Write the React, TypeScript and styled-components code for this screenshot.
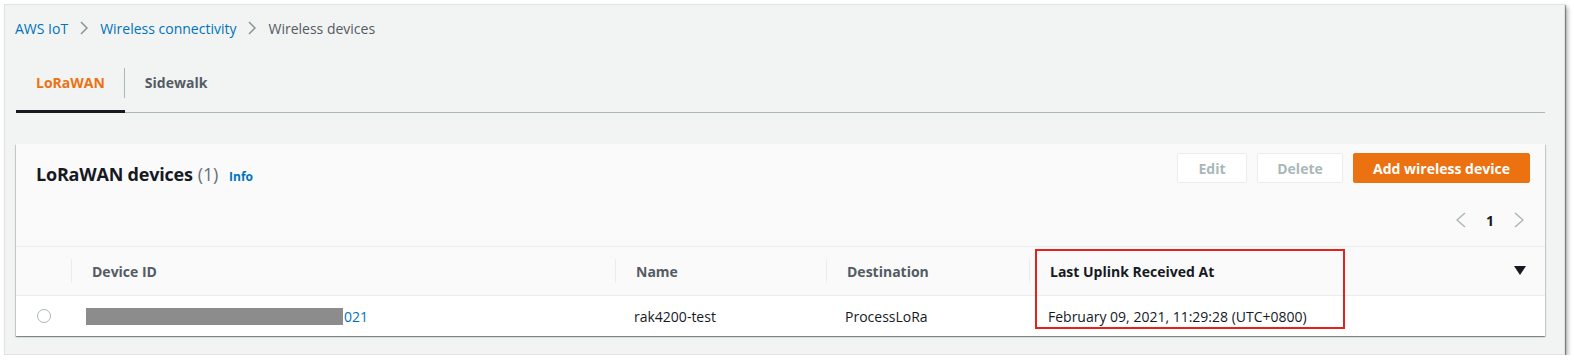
import React from "react";
import styled, { createGlobalStyle } from "styled-components";

const Global = createGlobalStyle`
  html, body { margin: 0; padding: 0; background: #ffffff; }
  body { font-family: "Open Sans", "Liberation Sans", Arial, sans-serif; }
  * { box-sizing: border-box; }
`;

const Frame = styled.div`
  margin: 4px 0 0 4px;
  width: 1561px;
  height: 351px;
  background: #f2f3f3;
  border: 1px solid #e1e3e3;
  box-shadow: 1px 1px 1px rgba(0,0,0,0.35), 3px 3px 4px rgba(0,0,0,0.28);
  padding: 0 19px 0 11px;
  display: flex;
  flex-direction: column;
`;

const Breadcrumbs = styled.nav`
  display: flex;
  align-items: center;
  height: 46px;
  margin-left: -1px;
  font-size: 14px;
  gap: 12px;
`;

const Crumb = styled.span<{ $current?: boolean }>`
  color: ${(p) => (p.$current ? "#545b64" : "#0073bb")};
  white-space: nowrap;
`;

const Tabs = styled.div`
  display: flex;
  align-items: stretch;
  height: 62px;
  border-bottom: 1px solid #aab7b8;
`;

const Tab = styled.div<{ $active?: boolean; $divider?: boolean }>`
  display: flex;
  align-items: center;
  padding: 3px 20px 0;
  font-size: 14px;
  font-weight: 700;
  color: ${(p) => (p.$active ? "#ec7211" : "#545b64")};
  position: relative;
  border-bottom: 3px solid ${(p) => (p.$active ? "#16191f" : "transparent")};
  margin-bottom: -1px;
  &::after {
    content: "";
    display: ${(p) => (p.$divider ? "block" : "none")};
    position: absolute;
    right: 0;
    top: 17px;
    height: 30px;
    width: 1px;
    background: #aab7b8;
  }
`;

const Card = styled.section`
  margin-top: 31px;
  width: 1529px;
  background: #fafafa;
  box-shadow: 0 1px 1px 0 rgba(0,28,36,0.3), 1px 1px 1px 0 rgba(0,28,36,0.15), -1px 1px 1px 0 rgba(0,28,36,0.15);
  display: flex;
  flex-direction: column;
`;

const CardHeader = styled.header`
  height: 102px;
  padding: 9px 15px 0 20px;
  display: flex;
  flex-direction: column;
`;

const HeaderTop = styled.div`
  display: flex;
  justify-content: space-between;
  align-items: flex-start;
`;

const Title = styled.h2`
  margin: 0;
  padding-top: 10px;
  font-size: 18px;
  line-height: 22px;
  font-weight: 700;
  color: #16191f;
  display: flex;
  align-items: baseline;
  letter-spacing: -0.2px;
`;

const Count = styled.span`
  font-weight: 400;
  color: #687078;
  margin-left: 5px;
`;

const InfoLink = styled.span`
  font-size: 12px;
  font-weight: 700;
  color: #0073bb;
  margin-left: 11px;
  letter-spacing: 0;
`;

const Actions = styled.div`
  display: flex;
  gap: 10px;
`;

const Button = styled.button<{ $primary?: boolean; $w: number }>`
  width: ${(p) => p.$w}px;
  height: 30px;
  font-family: inherit;
  font-size: 14px;
  font-weight: 700;
  border-radius: 2px;
  border: 1px solid ${(p) => (p.$primary ? "#ec7211" : "#eaeded")};
  background: ${(p) => (p.$primary ? "#ec7211" : "#ffffff")};
  color: ${(p) => (p.$primary ? "#ffffff" : "#aab7b8")};
  padding: 0;
`;

const Pager = styled.div`
  margin-top: 20px;
  align-self: flex-end;
  display: flex;
  align-items: center;
  height: 24px;
  gap: 20px;
  margin-right: 6px;
  font-size: 14px;
  font-weight: 700;
  color: #16191f;
`;

const Table = styled.div`
  display: grid;
  grid-template-columns: 55px 544px 211px 203px 1fr;
`;

const HeadCell = styled.div<{ $sep?: boolean; $sorted?: boolean }>`
  position: relative;
  height: 50px;
  background: #fafafa;
  border-top: 1px solid #eaeded;
  border-bottom: 1px solid #eaeded;
  display: flex;
  align-items: center;
  justify-content: space-between;
  padding: 0 19px 0 21px;
  font-size: 14px;
  font-weight: 700;
  color: ${(p) => (p.$sorted ? "#16191f" : "#545b64")};
  &::before {
    content: "";
    display: ${(p) => (p.$sep ? "block" : "none")};
    position: absolute;
    left: 0;
    top: 12px;
    height: 24px;
    width: 1px;
    background: #eaeded;
  }
`;

const BodyCell = styled.div<{ $center?: boolean }>`
  height: 40px;
  background: #ffffff;
  display: flex;
  align-items: center;
  justify-content: ${(p) => (p.$center ? "center" : "flex-start")};
  padding: 0 ${(p) => (p.$center ? "0" : "19px")};
  font-size: 14px;
  color: #16191f;
  white-space: nowrap;
`;

const Radio = styled.span`
  width: 14px;
  height: 14px;
  border-radius: 50%;
  border: 1.5px solid #aab7b8;
  background: #fff;
`;

const Redacted = styled.span`
  display: inline-block;
  width: 257px;
  height: 17px;
  background: #8c8c8c;
  margin-left: -4px;
`;

const Link = styled.span`
  color: #0073bb;
  margin-left: 1px;
`;

const Highlight = styled.div`
  position: absolute;
  left: 6px;
  top: 2px;
  width: 310px;
  height: 80px;
  border: 2px solid #e3231b;
  pointer-events: none;
`;

const Chevron = ({ dir, color, w, h }: { dir: "left" | "right"; color: string; w: number; h: number }) => (
  <svg width={w} height={h} viewBox={`0 0 ${w} ${h}`} fill="none">
    {dir === "right" ? (
      <polyline points={`1,1 ${w - 1},${h / 2} 1,${h - 1}`} stroke={color} strokeWidth="1.5" />
    ) : (
      <polyline points={`${w - 1},1 1,${h / 2} ${w - 1},${h - 1}`} stroke={color} strokeWidth="1.5" />
    )}
  </svg>
);

const Caret = () => (
  <svg width="12" height="10" viewBox="0 0 12 10">
    <polygon points="0,0 12,0 6,9" fill="#16191f" />
  </svg>
);

export default function App() {
  return (
    <>
      <Global />
      <Frame>
        <Breadcrumbs>
          <Crumb>AWS IoT</Crumb>
          <Chevron dir="right" color="#879596" w={8} h={14} />
          <Crumb>Wireless connectivity</Crumb>
          <Chevron dir="right" color="#879596" w={8} h={14} />
          <Crumb $current>Wireless devices</Crumb>
        </Breadcrumbs>
        <Tabs>
          <Tab $active $divider>LoRaWAN</Tab>
          <Tab>Sidewalk</Tab>
        </Tabs>
        <Card>
          <CardHeader>
            <HeaderTop>
              <Title>
                LoRaWAN devices<Count>(1)</Count>
                <InfoLink>Info</InfoLink>
              </Title>
              <Actions>
                <Button $w={70}>Edit</Button>
                <Button $w={86}>Delete</Button>
                <Button $w={177} $primary>Add wireless device</Button>
              </Actions>
            </HeaderTop>
            <Pager>
              <Chevron dir="left" color="#aab7b8" w={10} h={16} />
              <span>1</span>
              <Chevron dir="right" color="#aab7b8" w={10} h={16} />
            </Pager>
          </CardHeader>
          <Table>
            <HeadCell />
            <HeadCell $sep>Device ID</HeadCell>
            <HeadCell $sep>Name</HeadCell>
            <HeadCell $sep>Destination</HeadCell>
            <HeadCell $sep $sorted>
              <span>Last Uplink Received At</span>
              <Caret />
              <Highlight />
            </HeadCell>
            <BodyCell $center><Radio /></BodyCell>
            <BodyCell><Redacted /><Link>021</Link></BodyCell>
            <BodyCell>rak4200-test</BodyCell>
            <BodyCell>ProcessLoRa</BodyCell>
            <BodyCell>February 09, 2021, 11:29:28 (UTC+0800)</BodyCell>
          </Table>
        </Card>
      </Frame>
    </>
  );
}
